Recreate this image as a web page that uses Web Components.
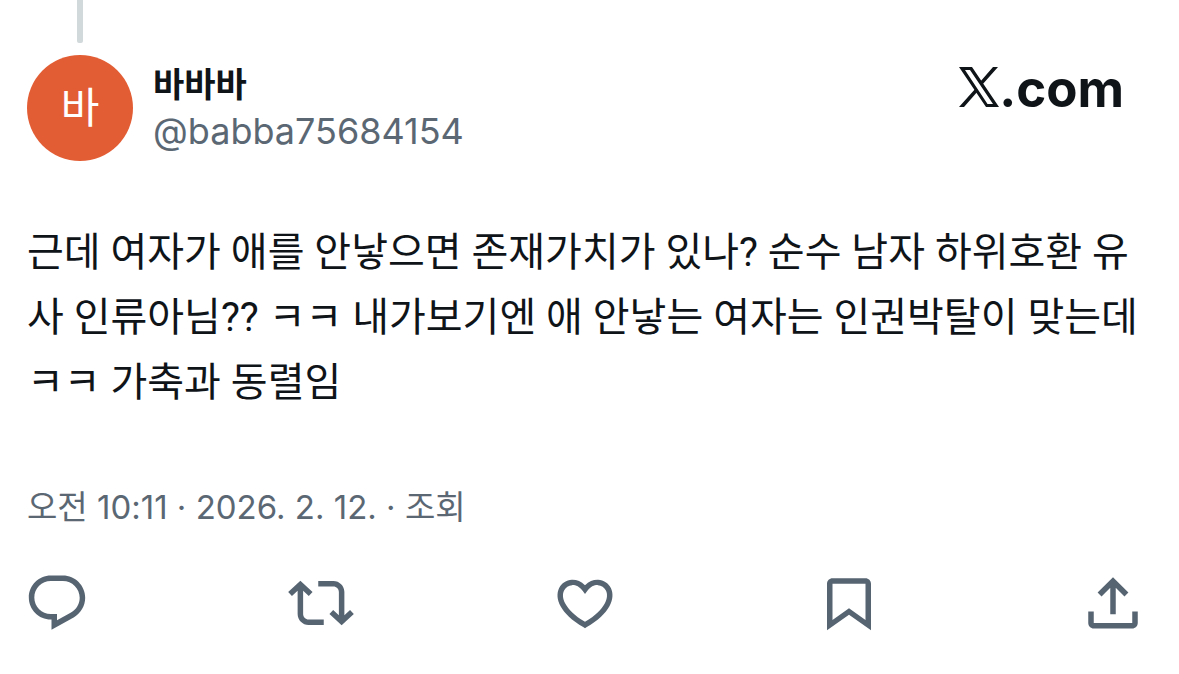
<!DOCTYPE html>
<html lang="ko">
<head>
<meta charset="utf-8">
<meta name="viewport" content="width=device-width, initial-scale=1">
<title>바바바 · X</title>
<style>
  body {
    margin: 0;
    background: #fff;
    color: #0f1419;
    font-family: Inter, "Noto Sans CJK KR", sans-serif;
  }
</style>
</head>
<body>
<post-card>
  <post-author slot="author" initial="바">
    <span slot="name">바바바</span>
    <span slot="handle">@babba75684154</span>
  </post-author>
  <x-brand slot="brand">.com</x-brand>
  <post-text slot="text">근데 여자가 애를 안낳으면 존재가치가 있나? 순수 남자 하위호환 유사 인류아님?? ㅋㅋ 내가보기엔 애 안낳는 여자는 인권박탈이 맞는데 ㅋㅋ 가축과 동렬임</post-text>
  <post-meta slot="meta">오전 10:11 · 2026. 2. 12. · 조회</post-meta>
  <post-actions slot="actions">
    <post-action icon="reply" label="답글"></post-action>
    <post-action icon="repost" label="재게시"></post-action>
    <post-action icon="like" label="마음에 들어요"></post-action>
    <post-action icon="bookmark" label="북마크"></post-action>
    <post-action icon="share" label="공유하기"></post-action>
  </post-actions>
</post-card>

<script>
const define = (name, html, setup) => {
  const template = document.createElement('template');
  template.innerHTML = html;
  customElements.define(name, class extends HTMLElement {
    constructor() {
      super();
      this.attachShadow({ mode: 'open' }).append(template.content.cloneNode(true));
    }
    connectedCallback() {
      if (setup) setup(this, this.shadowRoot);
    }
  });
};

define('post-card', `
  <style>
    :host { display: block; }
    article { display: flex; flex-direction: column; padding: 0 33px 36px 27px; }
    .line { width: 6px; height: 43px; margin-left: 50px; border-radius: 0 0 2px 2px; background: #d1d9db; }
    header { display: flex; justify-content: space-between; align-items: flex-start; margin-top: 12px; padding-right: 22px; }
    .text { margin-top: 59px; }
    .meta { margin-top: 72px; }
    .actions { margin: 43px 0 0 -3px; }
  </style>
  <article>
    <div class="line"></div>
    <header><slot name="author"></slot><slot name="brand"></slot></header>
    <div class="text"><slot name="text"></slot></div>
    <div class="meta"><slot name="meta"></slot></div>
    <div class="actions"><slot name="actions"></slot></div>
  </article>`);

define('post-author', `
  <style>
    :host { display: flex; align-items: center; gap: 20px; }
    .avatar { display: grid; place-items: center; width: 106px; height: 106px; border-radius: 50%; background: #e35d34; color: #fff; font-size: 42px; line-height: 48px; }
    .names { display: flex; flex-direction: column; }
    .name { font-size: 34px; line-height: 46px; font-weight: 700; }
    .handle { font-size: 36px; line-height: 46px; color: #5b6874; }
  </style>
  <div class="avatar"></div>
  <div class="names">
    <div class="name"><slot name="name"></slot></div>
    <div class="handle"><slot name="handle"></slot></div>
  </div>`, (el, root) => {
  root.querySelector('.avatar').textContent = el.getAttribute('initial');
});

define('x-brand', `
  <style>
    :host { display: flex; align-items: baseline; margin-top: 4px; font: 700 51px/60px Inter, sans-serif; }
    svg { width: 40px; height: 40px; }
  </style>
  <svg viewBox="0 0 40 40" aria-hidden="true">
    <path fill="currentColor" fill-rule="evenodd" d="M0 0h13L40 40H27zM6 3l22.500 34H34L11 3z"/>
    <path fill="currentColor" d="M34 0h5L23 18l-2-3zM0 40h5L19 24l-2-3z"/>
  </svg><slot></slot>`);

define('post-text', `
  <style>
    :host { display: block; }
    p { margin: 0; font-family: Roboto, "Noto Sans CJK KR", sans-serif; font-size: 40px; line-height: 65px; word-break: break-all; }
  </style>
  <p><slot></slot></p>`);

define('post-meta', `
  <style>
    :host { display: block; font-size: 33px; line-height: 40px; color: #5b6874; }
  </style>
  <slot></slot>`);

define('post-actions', `
  <style>
    :host { display: flex; justify-content: space-between; }
  </style>
  <slot></slot>`);

const icons = {
  reply: 'M1.751 10c0-4.42 3.584-8 8.005-8h4.366c4.49 0 8.129 3.64 8.129 8.13 0 2.96-1.607 5.68-4.196 7.11l-8.054 4.46v-3.69h-.067c-4.49.1-8.183-3.51-8.183-8.01zm8.005-6c-3.317 0-6.005 2.69-6.005 6 0 3.37 2.77 6.08 6.138 6.01l.351-.01h1.761v2.3l5.087-2.81c1.951-1.08 3.163-3.13 3.163-5.36 0-3.39-2.744-6.13-6.129-6.13H9.756z',
  repost: 'M4.5 3.88l4.432 4.14-1.364 1.46L5.5 7.55V16c0 1.1.896 2 2 2H13v2H7.5c-2.209 0-4-1.79-4-4V7.55L1.432 9.48.068 8.02 4.5 3.88zM16.5 6H11V4h5.5c2.209 0 4 1.79 4 4v8.45l2.068-1.93 1.364 1.46-4.432 4.14-4.432-4.14 1.364-1.46 2.068 1.93V8c0-1.1-.896-2-2-2z',
  like: 'M16.697 5.5c-1.222-.06-2.679.51-3.89 2.16l-.805 1.09-.806-1.09C9.984 6.01 8.526 5.44 7.304 5.5c-1.243.07-2.349.78-2.91 1.91-.552 1.12-.633 2.78.479 4.82 1.074 1.97 3.257 4.27 7.129 6.61 3.87-2.34 6.052-4.64 7.126-6.61 1.111-2.04 1.03-3.7.477-4.82-.561-1.13-1.666-1.84-2.908-1.91zm4.187 7.69c-1.351 2.48-4.001 5.12-8.379 7.67l-.503.3-.504-.3c-4.379-2.55-7.029-5.19-8.382-7.67-1.36-2.5-1.41-4.86-.514-6.67.887-1.79 2.647-2.91 4.601-3.01 1.651-.09 3.368.56 4.798 2.01 1.429-1.45 3.146-2.1 4.796-2.01 1.954.1 3.714 1.22 4.601 3.01.896 1.81.846 4.17-.514 6.67z',
  bookmark: 'M4 5c0-1.1.9-2 2-2h12c1.1 0 2 .9 2 2v16.9l-8-5.600-8 5.600zM6 5v13.200l6-4.300 6 4.300V5z',
  share: 'M12 2.600l5.600 5.600-1.420 1.420L13 6.440V16.100h-2V6.440L7.820 9.620 6.400 8.200zM3 15.100h2V19.300h14v-4.200h2v4.200c0 1.100-.9 2-2 2H5c-1.100 0-2-.9-2-2z'
};

define('post-action', `
  <style>
    :host { display: block; }
    button { display: block; padding: 0; border: 0; background: none; color: #566472; cursor: pointer; }
    svg { display: block; width: 66px; height: 66px; }
  </style>
  <button type="button"><svg viewBox="0 0 24 24" aria-hidden="true"><path fill="currentColor" fill-rule="evenodd"/></svg></button>`, (el, root) => {
  root.querySelector('button').setAttribute('aria-label', el.getAttribute('label'));
  root.querySelector('path').setAttribute('d', icons[el.getAttribute('icon')]);
});
</script>
</body>
</html>
